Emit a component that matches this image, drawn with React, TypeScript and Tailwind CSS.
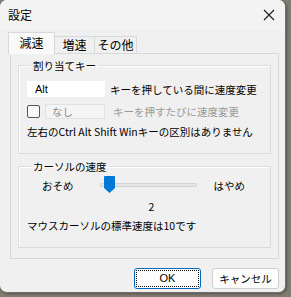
import React from "react";

export default function App() {
  return (
    <div className="w-[291px] h-[297px] bg-[#837c70] overflow-hidden font-['Noto_Sans_CJK_JP','Noto_Sans',sans-serif] text-[#000]">
      <div className="w-[286px] h-[293px] bg-[#f0f0f0] rounded-[7px] border-r border-b border-[#6e6e6e] flex flex-col shadow-[1px_1px_3px_rgba(0,0,0,0.35)]">
        {/* Title bar */}
        <div className="h-[30px] flex items-center justify-between pl-[8px] pr-[8px] bg-[#f3f3f3] rounded-t-[7px]">
          <span className="text-[12px] leading-[14px]">設定</span>
          <svg width="12" height="12" viewBox="0 0 12 12" className="mr-[2px]">
            <path d="M1 1 L11 11 M11 1 L1 11" stroke="#1a1a1a" strokeWidth="1.1" />
          </svg>
        </div>
        {/* Tabs */}
        <div className="mt-[2px] flex items-end h-[21px] pl-[8px] relative z-10">
          <div className="w-[47px] bg-[#f9f9f9] border border-b-0 border-[#d9d9d9] flex items-center justify-center text-[12px] leading-[14px] pb-[1px] mb-[-1px] h-[22px]">
            減速
          </div>
          <div className="w-[40px] h-[17px] bg-[#f0f0f0] border border-l-0 border-b-0 border-[#d9d9d9] flex items-center justify-center text-[12px] leading-[14px]">
            増速
          </div>
          <div className="w-[42px] h-[17px] bg-[#f0f0f0] border border-l-0 border-b-0 border-[#d9d9d9] flex items-center justify-center text-[12px] leading-[14px]">
            その他
          </div>
        </div>
        {/* Panel */}
        <div className="ml-[10px] w-[269px] h-[206px] border border-[#d9d9d9] bg-[#f0f0f0] px-[7px] pt-[5px] flex flex-col text-[10.5px] leading-[13px]">
          <fieldset className="border border-[#dcdcdc] h-[95px] px-[8px] shadow-[inset_1px_1px_0_#ffffff]">
            <legend className="ml-[4px] px-[2px] text-[10.5px] leading-[13px]">割り当てキー</legend>
            <div className="mt-[9px] flex items-center h-[16px]">
              <div className="w-[78px] h-[16px] bg-white flex items-center pl-[8px] font-['Liberation_Sans',sans-serif] text-[11px]">
                Alt
              </div>
              <span className="ml-[5px]">キーを押している間に速度変更</span>
            </div>
            <div className="mt-[7px] flex items-center h-[15px]">
              <div className="w-[13px] h-[13px] border border-[#555] rounded-[2px] bg-[#f8f8f8]" />
              <div className="ml-[5px] w-[60px] h-[15px] bg-[#f4f4f4] border border-[#e2e2e2] flex items-center pl-[6px] text-[#8a8a8a]">
                なし
              </div>
              <span className="ml-[8px] text-[#9a9a9a]">キーを押すたびに速度変更</span>
            </div>
            <div className="mt-[6px] whitespace-nowrap">左右のCtrl Alt Shift Winキーの区別はありません</div>
          </fieldset>
          <fieldset className="mt-[6px] border border-[#dcdcdc] h-[88px] px-[8px] shadow-[inset_1px_1px_0_#ffffff]">
            <legend className="ml-[4px] px-[2px] text-[10.5px] leading-[13px]">カーソルの速度</legend>
            <div className="mt-[3px] flex items-center h-[18px]">
              <span className="ml-[15px]">おそめ</span>
              <div className="ml-[26px] w-[97px] h-[18px] relative flex items-center">
                <div className="w-full h-[4px] bg-[#e6e6e6] border border-[#d4d4d4] rounded-[1px]" />
                <svg width="11" height="17" viewBox="0 0 11 17" className="absolute left-[4px] top-[0px]">
                  <path d="M0 1 Q0 0 1 0 L10 0 Q11 0 11 1 L11 12 L5.5 17 L0 12 Z" fill="#0078d7" />
                </svg>
              </div>
              <span className="ml-[17px]">はやめ</span>
            </div>
            <div className="mt-[6px] flex justify-center w-full pl-[14px]">2</div>
            <div className="mt-[6px] whitespace-nowrap">マウスカーソルの標準速度は10です</div>
          </fieldset>
        </div>
        {/* Buttons */}
        <div className="mt-[9px] flex justify-end pr-[6px] gap-[11px]">
          <div className="w-[67px] h-[21px] bg-[#fdfdfd] border-[1.5px] border-[#0067c0] rounded-[3px] p-[1px]">
            <div className="w-full h-full border border-dotted border-[#111] flex items-center justify-center text-[11px] leading-[13px] font-['Liberation_Sans',sans-serif]">
              OK
            </div>
          </div>
          <div className="w-[67px] h-[21px] bg-[#fdfdfd] border border-[#d0d0d0] rounded-[3px] flex items-center justify-center text-[10.5px] leading-[13px]">
            キャンセル
          </div>
        </div>
      </div>
    </div>
  );
}
